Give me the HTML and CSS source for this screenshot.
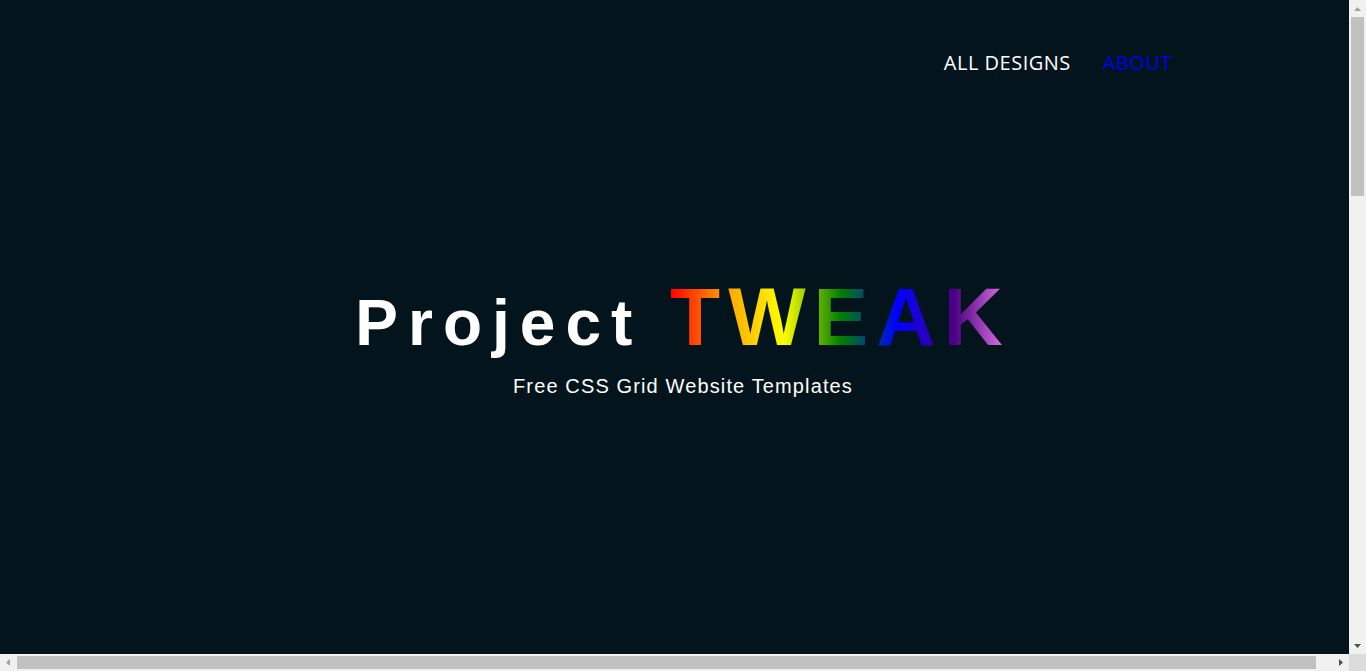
FILE: index.html
```html
<!DOCTYPE html>
<html lang="en">
<head>
<meta charset="utf-8">
<title>Project TWEAK</title>
<link rel="stylesheet" href="styles.css">
</head>
<body>
<div class="page">
  <header class="nav">
    <a class="nav-link" href="#designs">ALL DESIGNS</a>
    <a class="nav-link nav-link-active" href="#about">ABOUT</a>
  </header>
  <section class="hero">
    <h1 class="title">Project <span class="tweak">TWEAK</span></h1>
    <p class="tagline">Free CSS Grid Website Templates</p>
  </section>
  <section class="designs" id="designs"></section>
</div>

<div class="sb sb-v" aria-hidden="true">
  <div class="sb-btn">
    <svg width="17" height="17" viewBox="0 0 17 17"><polygon points="5,11 12,11 8.5,7" fill="#a3a3a3"/></svg>
  </div>
  <div class="sb-track-v"><div class="sb-thumb-v"></div></div>
  <div class="sb-btn">
    <svg width="17" height="17" viewBox="0 0 17 17"><polygon points="5,7 12,7 8.5,11" fill="#505050"/></svg>
  </div>
</div>
<div class="sb sb-h" aria-hidden="true">
  <div class="sb-btn">
    <svg width="17" height="17" viewBox="0 0 17 17"><polygon points="10,5 10,12 6,8.5" fill="#a3a3a3"/></svg>
  </div>
  <div class="sb-track-h"><div class="sb-thumb-h"></div></div>
  <div class="sb-btn">
    <svg width="17" height="17" viewBox="0 0 17 17"><polygon points="7,5 7,12 11,8.5" fill="#505050"/></svg>
  </div>
</div>
<div class="sb-corner" aria-hidden="true"></div>
</body>
</html>
```

FILE: styles.css
```css
html, body {
  margin: 0;
  padding: 0;
  background: #04141c;
}

.page {
  width: 100vw;
  background: #04141c;
  color: #ffffff;
}

.nav {
  display: flex;
  justify-content: flex-end;
  gap: 32px;
  padding: 49px 194px 0 0;
}

.nav-link {
  font-family: "Open Sans", "Liberation Sans", sans-serif;
  font-size: 20px;
  letter-spacing: 0.5px;
  color: #ffffff;
  text-decoration: none;
}

.nav-link-active {
  color: #0000f0;
}

.hero {
  padding-top: 200px;
  text-align: center;
}

.title {
  margin: 0;
  font-family: "Liberation Sans", Arial, sans-serif;
  font-weight: bold;
  font-size: 64px;
  line-height: 1;
  letter-spacing: 10px;
  color: #ffffff;
}

.tweak {
  font-size: 82px;
  letter-spacing: 8px;
  background: linear-gradient(to right, red, orange, yellow, green, blue, indigo, violet);
  -webkit-background-clip: text;
  background-clip: text;
  color: transparent;
}

.tagline {
  margin: 17px 0 0;
  font-family: "Liberation Sans", Arial, sans-serif;
  font-size: 20px;
  letter-spacing: 1.13px;
  color: #ffffff;
}

.designs {
  height: 1862px;
}

/* window scrollbars, drawn over the page */
.sb {
  position: fixed;
  display: flex;
  background: #f1f1f1;
  z-index: 10;
}

.sb-v {
  top: 0;
  right: 0;
  width: 17px;
  height: 654px;
  flex-direction: column;
}

.sb-h {
  left: 0;
  bottom: 0;
  width: 1349px;
  height: 17px;
  flex-direction: row;
}

.sb-btn {
  flex: 0 0 17px;
  width: 17px;
  height: 17px;
}

.sb-btn svg {
  display: block;
}

.sb-track-v {
  flex: 1;
  padding: 0 2px;
}

.sb-thumb-v {
  height: 179px;
  background: #c1c1c1;
}

.sb-track-h {
  flex: 1;
  padding: 2px 0;
}

.sb-thumb-h {
  width: 1299px;
  height: 100%;
  background: #c1c1c1;
}

.sb-corner {
  position: fixed;
  right: 0;
  bottom: 0;
  width: 17px;
  height: 17px;
  background: #dcdcdc;
  z-index: 10;
}
```
